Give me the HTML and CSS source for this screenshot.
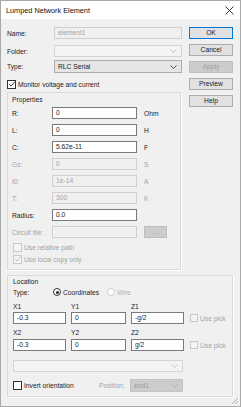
FILE: index.html
```
<!DOCTYPE html>
<html>
  <head>
    <meta charset="UTF-8" />
    <title>Lumped Network Element</title>
    <link rel="stylesheet" href="styles.css">
  </head>
  <body>
    <div class="window">
      <div class="titlebar">
        <span class="title">Lumped Network Element</span>
        <svg class="close" width="9" height="9" viewBox="0 0 9 9"><path d="M0.5 0.5L8.5 8.5M8.5 0.5L0.5 8.5" stroke="#222" stroke-width="0.9" fill="none"/></svg>
      </div>
      <div class="client">
        <div class="upper">
          <div class="main">
            <div class="frow">
              <span class="flabel">Name:</span>
              <div class="field wide ro">element1</div>
            </div>
            <div class="frow">
              <span class="flabel">Folder:</span>
              <div class="combo wide off"><span class="ctext"></span><svg class="chev" width="7" height="4" viewBox="0 0 7 4"><path d="M0.5 0.5L3.5 3.5L6.5 0.5" stroke="#c4c4c4" fill="none"/></svg></div>
            </div>
            <div class="frow type">
              <span class="flabel">Type:</span>
              <div class="combo wide"><span class="ctext">RLC Serial</span><svg class="chev" width="7" height="4" viewBox="0 0 7 4"><path d="M0.5 0.5L3.5 3.5L6.5 0.5" stroke="#555" fill="none"/></svg></div>
            </div>
            <div class="check monitor">
              <span class="box"><svg width="8" height="8" viewBox="0 0 8 8"><path d="M1.2 4.2L3.1 6.1L6.9 1.6" stroke="#222" stroke-width="0.9" fill="none"/></svg></span>
              <span>Monitor voltage and current</span>
            </div>
            <div class="group props">
              <div class="group-title">Properties</div>
              <div class="prow"><span class="plabel">R:</span><div class="field">0</div><span class="unit">Ohm</span></div>
              <div class="prow"><span class="plabel">L:</span><div class="field">0</div><span class="unit">H</span></div>
              <div class="prow"><span class="plabel">C:</span><div class="field">5.62e-11</div><span class="unit">F</span></div>
              <div class="prow off"><span class="plabel">Gs:</span><div class="field">0</div><span class="unit">S</span></div>
              <div class="prow off"><span class="plabel">I0:</span><div class="field">1e-14</div><span class="unit">A</span></div>
              <div class="prow off"><span class="plabel">T:</span><div class="field">300</div><span class="unit">K</span></div>
              <div class="prow"><span class="plabel">Radius:</span><div class="field">0.0</div></div>
              <div class="prow off"><span class="plabel">Circuit file:</span><div class="field"></div><div class="btn small off">...</div></div>
              <div class="check off rel">
                <span class="box"></span>
                <span>Use relative path</span>
              </div>
              <div class="check off local">
                <span class="box"><svg width="8" height="8" viewBox="0 0 8 8"><path d="M1.2 4.2L3.1 6.1L6.9 1.6" stroke="#b8b8b8" stroke-width="0.9" fill="none"/></svg></span>
                <span>Use local copy only</span>
              </div>
            </div>
          </div>
          <div class="buttons">
            <div class="btn default">OK</div>
            <div class="btn">Cancel</div>
            <div class="btn off">Apply</div>
            <div class="btn">Preview</div>
            <div class="btn">Help</div>
          </div>
        </div>
        <div class="group location">
          <div class="group-title">Location</div>
          <div class="typerow">
            <span class="tlabel">Type:</span>
            <span class="radio on"></span><span class="rtext">Coordinates</span>
            <span class="radio off"></span><span class="rtext off">Wire</span>
          </div>
          <div class="coords">
            <span>X1</span><span>Y1</span><span>Z1</span><span></span>
            <div class="field">-0.3</div><div class="field">0</div><div class="field">-g/2</div>
            <div class="check off pick"><span class="box"></span><span>Use pick</span></div>
            <span class="low">X2</span><span class="low">Y2</span><span class="low">Z2</span><span></span>
            <div class="field">-0.3</div><div class="field">0</div><div class="field">g/2</div>
            <div class="check off pick"><span class="box"></span><span>Use pick</span></div>
          </div>
          <div class="combo long off"><span class="ctext"></span><svg class="chev" width="7" height="4" viewBox="0 0 7 4"><path d="M0.5 0.5L3.5 3.5L6.5 0.5" stroke="#c4c4c4" fill="none"/></svg></div>
          <div class="invrow">
            <div class="check invert">
              <span class="box"></span>
              <span>Invert orientation</span>
            </div>
            <span class="poslabel">Position:</span>
            <div class="combo pos off"><span class="ctext">end1</span><svg class="chev" width="7" height="4" viewBox="0 0 7 4"><path d="M0.5 0.5L3.5 3.5L6.5 0.5" stroke="#b0b0b0" fill="none"/></svg></div>
          </div>
        </div>
      </div>
      <svg class="grip" width="8" height="8" viewBox="0 0 8 8"><path d="M7 1L1 7M7 4L4 7" stroke="#b0b0b0" stroke-width="1" fill="none"/></svg>
    </div>
  </body>
</html>
```
FILE: styles.css
```
body {
   margin: 0;
   font-family: "Liberation Sans", Arial, sans-serif;
   font-size: 6.7px;
   color: #1c1c1c;
   background-color: #f0f0f0;
}
.window {
   position: relative;
   width: 241px;
   height: 407px;
   box-sizing: border-box;
   border: 1px solid #a9a9a9;
   background-color: #f0f0f0;
}
.titlebar {
   height: 18px;
   background-color: white;
   display: flex;
   align-items: center;
   justify-content: space-between;
   padding: 0 6px 0 5px;
}
.title {
   font-size: 7.3px;
   color: #111;
}
.client {
   padding: 8px 0 0 6px;
}
.upper {
   display: flex;
   gap: 7px;
}
.main {
   width: 175px;
}

/* form rows at the top */
.frow {
   display: flex;
   align-items: center;
   height: 12px;
}
.frow + .frow {
   margin-top: 6px;
}
.frow.type {
   margin-top: 3px;
   height: 13px;
}
.flabel {
   width: 47px;
}
.wide {
   width: 128px;
}
.field {
   box-sizing: border-box;
   height: 12px;
   line-height: 10px;
   padding: 0 3px;
   border: 1px solid #7a7a7a;
   background-color: white;
   white-space: nowrap;
   overflow: hidden;
}
.field.ro, .off .field {
   border-color: #cfcfcf;
   background-color: #f0f0f0;
   color: #a3a3a3;
}
.combo {
   box-sizing: border-box;
   height: 100%;
   display: flex;
   align-items: center;
   justify-content: space-between;
   padding: 0 4px 0 3px;
   border: 1px solid #adadad;
   background-color: #e5e5e5;
}
.combo.off {
   border-color: #d4d4d4;
   background-color: #f4f4f4;
   color: #a3a3a3;
}
.combo.pos.off {
   background-color: #cccccc;
   border-color: #c4c4c4;
   color: #9a9a9a;
}

/* checkboxes */
.check {
   display: flex;
   align-items: center;
   gap: 2px;
   height: 10px;
}
.box {
   box-sizing: border-box;
   width: 9px;
   height: 9px;
   border: 1px solid #333;
   background-color: white;
   display: flex;
   align-items: center;
   justify-content: center;
}
.box svg {
   flex: none;
}
.check.off {
   color: #a3a3a3;
}
.check.off .box {
   border-color: #c8c8c8;
   background-color: #f4f4f4;
}
.monitor {
   margin-top: 6px;
}

/* group boxes */
.group {
   box-sizing: border-box;
   border: 1px solid #dadada;
   box-shadow: 1px 1px 0 white;
}
.group-title {
   height: 9px;
   line-height: 9px;
}
.props {
   margin-top: 3px;
   width: 174px;
   height: 178px;
   padding: 2px 0 0 4px;
}
.props .group-title {
   margin-bottom: 3px;
}
.prow {
   display: flex;
   align-items: center;
   height: 12px;
   margin-bottom: 5px;
}
.prow.off {
   color: #a3a3a3;
}
.plabel {
   width: 40px;
   white-space: nowrap;
}
.prow .field {
   width: 85px;
}
.unit {
   margin-left: 7px;
}
.btn {
   box-sizing: border-box;
   height: 12px;
   line-height: 10px;
   text-align: center;
   border: 1px solid #adadad;
   background-color: #e1e1e1;
}
.btn.default {
   border-color: #0078d7;
   box-shadow: inset 0 0 0 1px #e1e1e1;
}
.btn.off {
   border-color: #bfbfbf;
   background-color: #cccccc;
   color: #a0a0a0;
}
.btn.small {
   width: 23px;
   margin-left: 7px;
}
.check.rel {
   margin-top: 3px;
   height: 8px;
   margin-left: 1px;
}
.check.local {
   margin-top: 4px;
   height: 8px;
   margin-left: 1px;
}
.buttons {
   width: 44px;
   display: flex;
   flex-direction: column;
   gap: 5px;
}

/* location */
.location {
   margin-top: 5px;
   width: 226px;
   height: 122px;
   padding: 0 0 0 5px;
}
.location .group-title {
   margin-top: 1px;
}
.typerow {
   display: flex;
   align-items: center;
   height: 8px;
   margin-top: 2px;
}
.tlabel {
   width: 40px;
}
.radio {
   box-sizing: border-box;
   width: 8px;
   height: 8px;
   border: 1px solid #333;
   border-radius: 50%;
   background-color: white;
   position: relative;
}
.radio.on::after {
   content: "";
   position: absolute;
   left: 1.5px;
   top: 1.5px;
   width: 3px;
   height: 3px;
   border-radius: 50%;
   background-color: #222;
}
.radio.off {
   border-color: #d0d0d0;
   margin-left: 8px;
}
.rtext {
   margin-left: 2px;
}
.rtext.off {
   color: #b0b0b0;
}
.coords {
   display: grid;
   grid-template-columns: 53px 55px 53px auto;
   grid-template-rows: 8px 12px 11px 12px;
   column-gap: 5px;
   row-gap: 2px;
   margin-top: 6px;
   align-items: center;
}
.coords .low {
   align-self: end;
   line-height: 8px;
}
.pick {
   margin-left: 1px;
   height: 9px;
}
.pick .box {
   width: 8px;
   height: 8px;
}
.long {
   width: 170px;
   height: 12px;
   margin-top: 9px;
}
.invrow {
   display: flex;
   align-items: center;
   height: 13px;
   margin-top: 7px;
}
.invert {
   width: 86px;
}
.poslabel {
   width: 31px;
   color: #a3a3a3;
}
.pos {
   width: 53px;
}
.grip {
   position: absolute;
   right: 1px;
   bottom: 1px;
}
```
